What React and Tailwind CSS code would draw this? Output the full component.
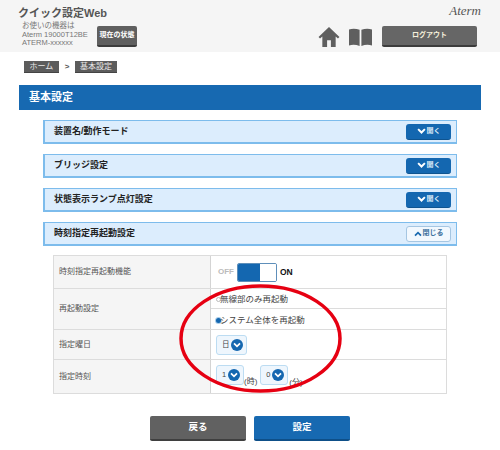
import React from 'react';

const font = "font-['Liberation_Sans','Noto_Sans_CJK_JP',sans-serif]";

const Chevron = ({ up, className }) => (
  <svg viewBox="0 0 12 8" className={className} fill="none" stroke="currentColor" strokeWidth="2.6">
    <path d={up ? 'M1.5 6.5 6 2l4.5 4.5' : 'M1.5 1.5 6 6l4.5-4.5'} />
  </svg>
);

const Accordion = ({ title, open }) => (
  <div className="flex items-center justify-between h-6 pl-[9px] pr-[5px] bg-[#dcedfd] border-2 border-[#7dbcec] border-t border-r">
    <span className="text-[9px] font-bold text-[#222]">{title}</span>
    {open ? (
      <div className="flex items-center justify-center gap-[1px] w-[45px] h-4 rounded-[3px] bg-[#f2f8fe] border border-[#a5c6e2] text-[#1a6ab0]">
        <Chevron up className="w-[8px] h-[6px]" />
        <span className="text-[7px] font-bold text-[#3b6f9c]">閉じる</span>
      </div>
    ) : (
      <div className="flex items-center justify-center gap-[1px] w-[45px] h-4 rounded-[3px] bg-[#1467b0] border-b border-[#0f5490] text-white">
        <Chevron className="w-[9px] h-[6px]" />
        <span className="text-[7px] font-bold text-[#d8e8f6]">開く</span>
      </div>
    )}
  </div>
);

const Select = ({ value, wide }) => (
  <div className={`flex items-center justify-between h-[20px] rounded-[3px] bg-[#eef6fd] border border-[#bcdcf2] ${wide ? 'w-[31px] pl-[5px] pr-[3px]' : 'w-[28px] pl-[5px] pr-[3px]'}`}>
    <span className="text-[7.5px] text-[#444]">{value}</span>
    <span className="flex items-center justify-center w-[12px] h-[12px] rounded-full bg-[#1467b0] text-white">
      <Chevron className="w-[8px] h-[6px]" />
    </span>
  </div>
);

const Label = ({ children }) => (
  <div className="flex items-center w-[157px] shrink-0 pl-[5px] bg-[#f5f5f5] border-r border-[#d4d4d4] text-[8px] text-[#555]">
    {children}
  </div>
);

export default function App() {
  return (
    <div className={`relative w-[500px] h-[450px] overflow-hidden bg-white ${font}`}>
      {/* Header */}
      <div className="flex justify-between h-[52px] bg-[#f5f5f5] px-[18px]">
        <div>
          <div className="pt-[5px] text-[11px] leading-[17px] font-bold text-[#555]">クイック設定Web</div>
          <div className="flex items-end pl-[4px]">
            <div className="w-[75px] text-[7.5px] leading-[8.5px] text-[#777]">
              <div>お使いの機器は</div>
              <div>Aterm 19000T12BE</div>
              <div>ATERM-xxxxxx</div>
            </div>
            <div className="flex items-center justify-center w-[40px] h-[21px] mb-[1px] rounded-[2px] bg-[#5f5f5f] border-b-2 border-[#3c3c3c] text-[7px] font-bold text-white">
              現在の状態
            </div>
          </div>
        </div>
        <div className="flex flex-col items-end">
          <div className="pt-[3px] pr-[1px] text-[13px] leading-[16px] italic text-[#555] font-['Liberation_Serif',serif]">Aterm</div>
          <div className="flex items-center mt-[7px] mr-[5px]">
            <svg viewBox="0 0 22 21" className="w-[22px] h-[20px] text-[#5f5f5f]" fill="currentColor">
              <path d="M11 0 0 10.5l1.6 1.6L4 10v11h5v-7h4v7h5V10l2.4 2.1 1.6-1.6z" />
            </svg>
            <svg viewBox="0 0 25 18" className="ml-[8px] w-[25px] h-[18px] text-[#5f5f5f]" fill="currentColor">
              <path d="M1 1.5C4 .3 8 .3 11.6 1.8V18C8 16.5 4 16.5 1 17.5zM24 1.5C21 .3 17 .3 13.4 1.8V18c3.6-1.5 7.6-1.5 10.6-.5z" />
            </svg>
            <div className="ml-[9px] flex items-center justify-center w-[95px] h-[21px] rounded-[2px] bg-[#666] border-b-2 border-[#3c3c3c] text-[7px] font-bold text-[#f5f0dc]">
              ログアウト
            </div>
          </div>
        </div>
      </div>

      {/* Breadcrumb */}
      <div className="flex items-center gap-[4px] mt-[9px] pl-[24px] text-[8px] text-[#e8e8e8]">
        <span className="flex items-center justify-center w-[35px] h-[12px] bg-[#5c5c5c] border-b border-[#444]">ホーム</span>
        <span className="text-[#555] font-bold w-[8px] text-center">&gt;</span>
        <span className="flex items-center justify-center w-[42px] h-[12px] bg-[#5c5c5c] border-b border-[#444]">基本設定</span>
      </div>

      {/* Section title */}
      <div className="flex items-center mx-[19px] mt-[12px] h-[25px] pl-[10px] bg-[#1769b1] text-[11px] font-bold text-white">
        基本設定
      </div>

      {/* Accordions */}
      <div className="flex flex-col gap-[10px] mx-[43px] mt-[10px]">
        <Accordion title="装置名/動作モード" />
        <Accordion title="ブリッジ設定" />
        <Accordion title="状態表示ランプ点灯設定" />
        <Accordion title="時刻指定再起動設定" open />
      </div>

      {/* Settings table */}
      <div className="flex flex-col mx-[53px] mt-[9px] border border-[#dcdcdc]">
        <div className="flex h-[33px] border-b border-[#dcdcdc]">
          <Label>時刻指定再起動機能</Label>
          <div className="flex items-center pl-[7px]">
            <span className="text-[8px] font-bold text-[#bbb]">OFF</span>
            <div className="flex ml-[3px] w-[40px] h-[19px] rounded-[2px] border border-[#5e8fba] overflow-hidden">
              <div className="w-[22px] bg-[#1467b0]" />
              <div className="flex-1 bg-white" />
            </div>
            <span className="ml-[3px] text-[8.5px] font-bold text-[#111]">ON</span>
          </div>
        </div>
        <div className="flex h-[41px] border-b border-[#dcdcdc]">
          <Label>再起動設定</Label>
          <div className="flex flex-col flex-1 text-[8.5px] text-[#444]">
            <div className="flex items-center flex-1 pl-[5px] pt-[1px] border-b border-[#dcdcdc]">
              <span className="shrink-0 w-[5px] h-[5px] mr-[-1px] rounded-full bg-white border border-[#bbb]" />
              無線部のみ再起動
            </div>
            <div className="flex items-center flex-1 pl-[5px] pt-[2px]">
              <span className="shrink-0 w-[5px] h-[5px] mr-[-1px] rounded-full bg-[#1467b0] ring-1 ring-[#a9cdea]" />
              システム全体を再起動
            </div>
          </div>
        </div>
        <div className="flex h-[30px] border-b border-[#dcdcdc]">
          <Label>指定曜日</Label>
          <div className="flex items-center pl-[5px]">
            <Select value="日" wide />
          </div>
        </div>
        <div className="flex h-[33px]">
          <Label>指定時刻</Label>
          <div className="flex items-start pt-[5px] pl-[5px] text-[8px] text-[#444]">
            <Select value="1" />
            <span className="mt-[11px]">(時)</span>
            <span className="ml-[3px]"><Select value="0" /></span>
            <span className="ml-[1px] mt-[12px]">(分)</span>
          </div>
        </div>
      </div>

      {/* Actions */}
      <div className="flex justify-center gap-[8px] mt-[22px]">
        <div className="flex items-center justify-center w-[96px] h-[25px] rounded-[2px] bg-[#616161] border-b-2 border-[#3f3f3f] text-[9.5px] font-bold text-white">
          戻る
        </div>
        <div className="flex items-center justify-center w-[96px] h-[25px] rounded-[2px] bg-[#1769b1] border-b-2 border-[#0e4f88] text-[9.5px] font-bold text-white">
          設定
        </div>
      </div>

      {/* Red annotation circle */}
      <svg viewBox="0 0 170 116" className="absolute left-[176px] top-[281px] w-[170px] h-[116px]" fill="none">
        <ellipse cx="84.5" cy="57.5" rx="79.5" ry="52.5" stroke="#e60012" strokeWidth="3.5" />
      </svg>
    </div>
  );
}
